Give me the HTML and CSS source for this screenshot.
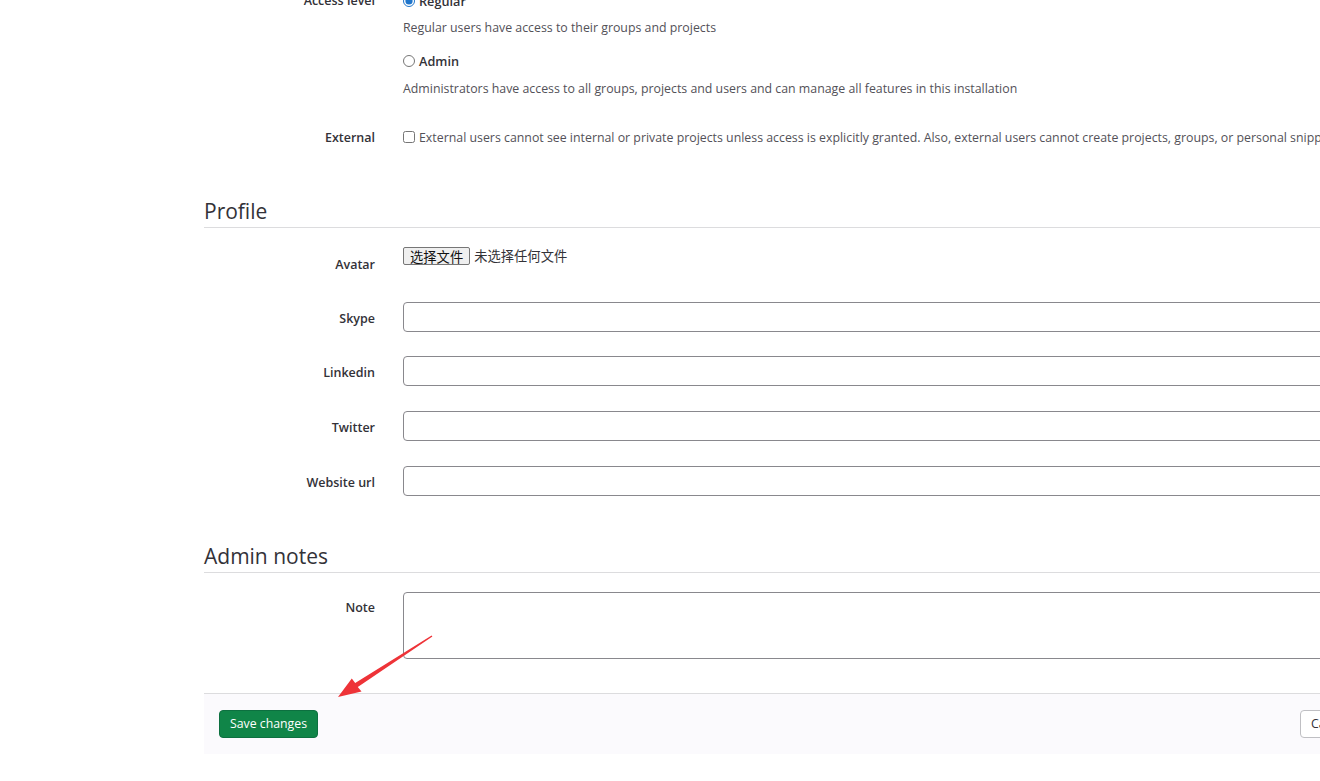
FILE: index.html
```html
<!DOCTYPE html>
<html lang="en">
<head>
<meta charset="utf-8">
<title>Edit user</title>
<link rel="stylesheet" href="styles.css">
</head>
<body>
<div class="page">
  <div class="row row-access">
    <div class="label">Access level</div>
    <div class="field">
      <label class="option"><input type="radio" name="level" checked> <span>Regular</span></label>
      <p class="desc desc-first">Regular users have access to their groups and projects</p>
      <label class="option option-admin"><input type="radio" name="level"> <span>Admin</span></label>
      <p class="desc desc-admin">Administrators have access to all groups, projects and users and can manage all features in this installation</p>
    </div>
  </div>
  <div class="row row-external">
    <div class="label">External</div>
    <div class="field">
      <label class="check"><input type="checkbox"> <span>External users cannot see internal or private projects unless access is explicitly granted. Also, external users cannot create projects, groups, or personal snippets.</span></label>
    </div>
  </div>

  <h3 class="section-title title-profile">Profile</h3>

  <div class="row row-avatar">
    <div class="label">Avatar</div>
    <div class="field">
      <span class="file"><button class="file-btn" type="button">选择文件</button><span class="file-none">未选择任何文件</span></span>
    </div>
  </div>
  <div class="row row-input row-first">
    <div class="label">Skype</div>
    <div class="field"><input class="text" type="text"></div>
  </div>
  <div class="row row-input">
    <div class="label">Linkedin</div>
    <div class="field"><input class="text" type="text"></div>
  </div>
  <div class="row row-input">
    <div class="label">Twitter</div>
    <div class="field"><input class="text" type="text"></div>
  </div>
  <div class="row row-input row-last">
    <div class="label">Website url</div>
    <div class="field"><input class="text" type="text"></div>
  </div>

  <h3 class="section-title title-notes">Admin notes</h3>

  <div class="row row-note">
    <div class="label">Note</div>
    <div class="field"><textarea class="note"></textarea></div>
  </div>

  <div class="footer">
    <button class="btn btn-save" type="button">Save changes</button>
    <button class="btn btn-cancel" type="button">Cancel</button>
  </div>
</div>

<svg class="annotation" width="1320" height="781" viewBox="0 0 1320 781" xmlns="http://www.w3.org/2000/svg">
  <polygon fill="#ee3338" points="338,697 361.5,691.5 357.8,686.9 432.4,636.5 431.6,635.5 355.2,683.1 351.8,678.5"/>
</svg>
</body>
</html>
```
FILE: styles.css
```css
html, body {
  margin: 0;
  padding: 0;
  background: #ffffff;
  overflow: hidden;
}

body {
  font-family: "Open Sans", "Noto Sans", "Noto Sans CJK SC", sans-serif;
  font-size: 13px;
  color: #333238;
  position: relative;
  width: 1320px;
  height: 781px;
}

.page {
  margin-top: -9px;
  padding-left: 204px;
  width: 1171px;
}

.row {
  display: grid;
  grid-template-columns: 171px 1fr;
  column-gap: 28px;
  align-items: start;
}

.label {
  text-align: right;
  font-weight: 600;
  font-size: 12.5px;
  line-height: 20px;
  color: #333238;
}

.field {
  min-width: 0;
}

.option {
  display: flex;
  align-items: center;
  gap: 4px;
  line-height: 20px;
  font-weight: 600;
  font-size: 12.7px;
  color: #333238;
}

.option input,
.check input {
  margin: 0;
  width: 12px;
  height: 12px;
  accent-color: #1f75cb;
}

.option-admin {
  margin-top: 13px;
}

.desc {
  margin: 7px 0 0;
  line-height: 20px;
  color: #535158;
  font-size: 12.35px;
  white-space: nowrap;
}

.desc-admin {
  margin-top: 8px;
}

.row-external {
  margin-top: 29px;
}

.check {
  display: flex;
  align-items: center;
  gap: 4px;
  line-height: 20px;
  white-space: nowrap;
  color: #535158;
  font-size: 12.35px;
}

.check input {
  margin-top: -2px;
}

.section-title {
  margin: 0;
  font-weight: 400;
  font-size: 21px;
  line-height: 25px;
  color: #333238;
  padding-bottom: 3px;
  border-bottom: 1px solid #dcdcde;
}

.title-profile {
  margin-top: 51px;
}

.title-notes {
  margin-top: 48px;
}

.row-avatar {
  margin-top: 18px;
  margin-bottom: 27px;
}

.row-avatar .label {
  padding-top: 9px;
}

.row-avatar .field {
  padding-top: 1px;
}

.file {
  display: inline-flex;
  align-items: center;
  font-family: "Noto Sans CJK SC", sans-serif;
  font-size: 13.3px;
  color: #333238;
}

.file-btn {
  font-family: "Noto Sans CJK SC", sans-serif;
  font-size: 13.3px;
  line-height: 15px;
  height: 18px;
  padding: 0 6px;
  margin: 0 4px 0 0;
  background: #efefef;
  color: #111;
  border: 1px solid #767676;
  border-radius: 2px;
}

.file-none {
  line-height: 18px;
}

.row-input {
  margin-bottom: 25px;
}

.row-first {
  margin-bottom: 24px;
}

.row-input .label {
  padding-top: 7px;
}

.row-note .label {
  padding-top: 6px;
}

.row-last {
  margin-bottom: 0;
}

.text {
  display: block;
  box-sizing: border-box;
  width: 100%;
  height: 30px;
  margin: 0;
  border: 1px solid #89888d;
  border-radius: 4px;
  background: #fff;
}

.row-note {
  margin-top: 19px;
}

.note {
  display: block;
  box-sizing: border-box;
  width: 100%;
  height: 67px;
  margin: 0;
  border: 1px solid #89888d;
  border-radius: 4px;
  resize: none;
  background: #fff;
}

.footer {
  margin-top: 34px;
  border-top: 1px solid #dcdcde;
  background: #fbfafd;
  padding: 16px 15px 16px;
  display: flex;
  justify-content: space-between;
  align-items: center;
}

.btn {
  font-family: "Open Sans", "Noto Sans", sans-serif;
  font-size: 12.3px;
  height: 28px;
  line-height: 26px;
  padding: 0 10px;
  border-radius: 4px;
  margin: 0;
}

.btn-save {
  background: #108548;
  border: 1px solid #0d7040;
  color: #ffffff;
}

.btn-cancel {
  background: #ffffff;
  border: 1px solid #bfbfc3;
  color: #333238;
}

.annotation {
  position: absolute;
  top: 0;
  left: 0;
  pointer-events: none;
}
```
